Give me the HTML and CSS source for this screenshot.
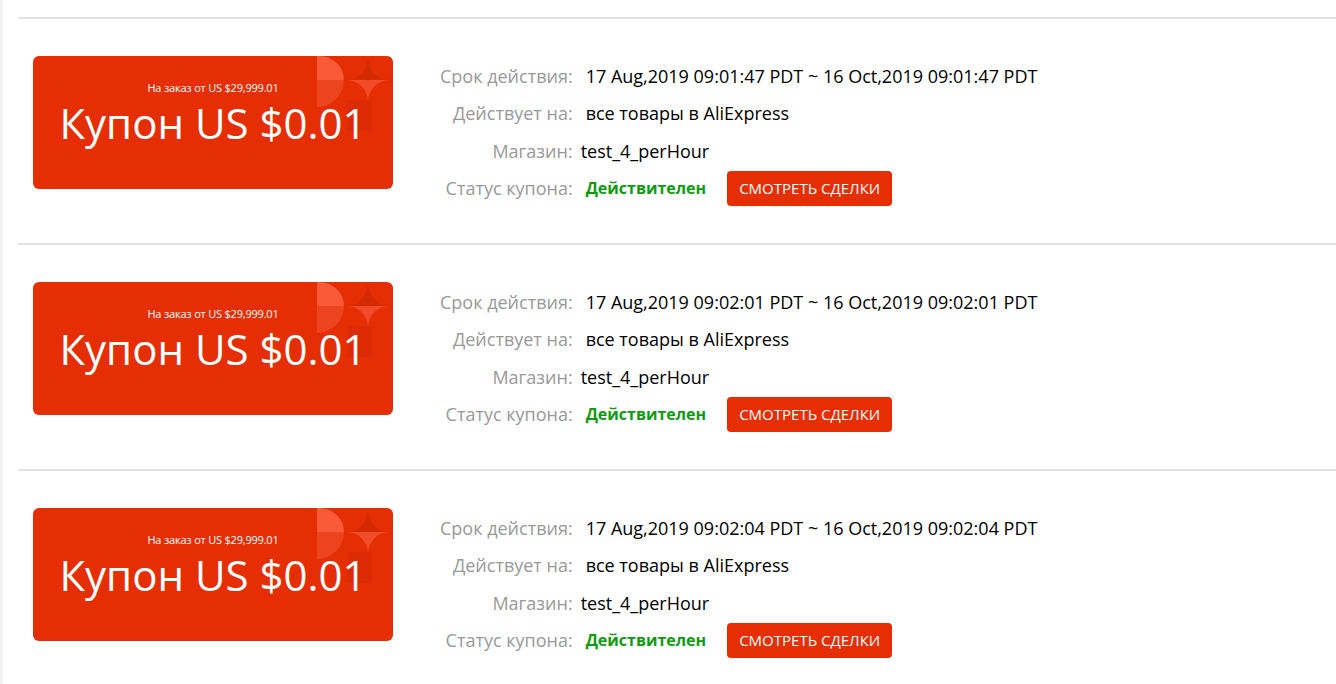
FILE: index.html
```html
<!DOCTYPE html>
<html lang="ru">
<head>
<meta charset="utf-8">
<title>Купоны</title>
<link rel="stylesheet" href="styles.css">
</head>
<body>
<div class="page">
  <div class="coupon-row">
    <div class="card">
      <svg class="deco" viewBox="280 0 80 80" width="80" height="80" aria-hidden="true">
        <path d="M284 0 H286 A25 24 0 0 1 311 24 H284 Z" fill="#fb5a39"/>
        <path d="M284 24 H311 A27 27 0 0 1 284 51 Z" fill="#ed4420"/>
        <rect x="314" y="44" width="25" height="31" fill="#d32a05" opacity="0.5"/>
        <path d="M314 24 A21 24 0 0 0 335 0 A21 24 0 0 0 356 24 Z" fill="#d42a03"/>
        <path d="M314 24 H356 A21 22 0 0 0 335 46 A21 22 0 0 0 314 24 Z" fill="#f24b29"/>
      </svg>
      <div class="card-min">На заказ от US $29,999.01</div>
      <div class="card-value">Купон US $0.01</div>
    </div>
    <div class="info">
      <div class="label">Срок действия:</div>
      <div class="value">17 Aug,2019 09:01:47 PDT ~ 16 Oct,2019 09:01:47 PDT</div>
      <div class="label">Действует на:</div>
      <div class="value">все товары в AliExpress</div>
      <div class="label">Магазин:</div>
      <div class="value value-store">test_4_perHour</div>
      <div class="label">Статус купона:</div>
      <div class="value status"><span class="valid">Действителен</span><a class="btn" href="#">СМОТРЕТЬ СДЕЛКИ</a></div>
    </div>
  </div>
  <div class="coupon-row">
    <div class="card">
      <svg class="deco" viewBox="280 0 80 80" width="80" height="80" aria-hidden="true">
        <path d="M284 0 H286 A25 24 0 0 1 311 24 H284 Z" fill="#fb5a39"/>
        <path d="M284 24 H311 A27 27 0 0 1 284 51 Z" fill="#ed4420"/>
        <rect x="314" y="44" width="25" height="31" fill="#d32a05" opacity="0.5"/>
        <path d="M314 24 A21 24 0 0 0 335 0 A21 24 0 0 0 356 24 Z" fill="#d42a03"/>
        <path d="M314 24 H356 A21 22 0 0 0 335 46 A21 22 0 0 0 314 24 Z" fill="#f24b29"/>
      </svg>
      <div class="card-min">На заказ от US $29,999.01</div>
      <div class="card-value">Купон US $0.01</div>
    </div>
    <div class="info">
      <div class="label">Срок действия:</div>
      <div class="value">17 Aug,2019 09:02:01 PDT ~ 16 Oct,2019 09:02:01 PDT</div>
      <div class="label">Действует на:</div>
      <div class="value">все товары в AliExpress</div>
      <div class="label">Магазин:</div>
      <div class="value value-store">test_4_perHour</div>
      <div class="label">Статус купона:</div>
      <div class="value status"><span class="valid">Действителен</span><a class="btn" href="#">СМОТРЕТЬ СДЕЛКИ</a></div>
    </div>
  </div>
  <div class="coupon-row">
    <div class="card">
      <svg class="deco" viewBox="280 0 80 80" width="80" height="80" aria-hidden="true">
        <path d="M284 0 H286 A25 24 0 0 1 311 24 H284 Z" fill="#fb5a39"/>
        <path d="M284 24 H311 A27 27 0 0 1 284 51 Z" fill="#ed4420"/>
        <rect x="314" y="44" width="25" height="31" fill="#d32a05" opacity="0.5"/>
        <path d="M314 24 A21 24 0 0 0 335 0 A21 24 0 0 0 356 24 Z" fill="#d42a03"/>
        <path d="M314 24 H356 A21 22 0 0 0 335 46 A21 22 0 0 0 314 24 Z" fill="#f24b29"/>
      </svg>
      <div class="card-min">На заказ от US $29,999.01</div>
      <div class="card-value">Купон US $0.01</div>
    </div>
    <div class="info">
      <div class="label">Срок действия:</div>
      <div class="value">17 Aug,2019 09:02:04 PDT ~ 16 Oct,2019 09:02:04 PDT</div>
      <div class="label">Действует на:</div>
      <div class="value">все товары в AliExpress</div>
      <div class="label">Магазин:</div>
      <div class="value value-store">test_4_perHour</div>
      <div class="label">Статус купона:</div>
      <div class="value status"><span class="valid">Действителен</span><a class="btn" href="#">СМОТРЕТЬ СДЕЛКИ</a></div>
    </div>
  </div>
</div>
</body>
</html>
```

FILE: styles.css
```css
html, body {
  margin: 0;
  padding: 0;
  background: #fff;
}
body {
  font-family: "Open Sans", "Liberation Sans", sans-serif;
  color: #000;
  overflow: hidden;
}
.page {
  border-left: 3px solid #f0f0f0;
  padding: 17px 0 0 15px;
  min-height: 700px;
  box-sizing: border-box;
}
.coupon-row {
  display: flex;
  align-items: flex-start;
  border-top: 2px solid #e2e2e2;
  padding: 37px 0 37px 15px;
  height: 150px;
}
.card {
  position: relative;
  width: 360px;
  height: 133px;
  background: #e62e04;
  border-radius: 6px;
  overflow: hidden;
  color: #fff;
  display: flex;
  flex-direction: column;
  align-items: center;
  box-sizing: border-box;
  padding-top: 25px;
}
.deco {
  position: absolute;
  top: 0;
  left: 280px;
}
.card-min {
  position: relative;
  font-size: 11px;
  line-height: 14px;
  letter-spacing: -0.2px;
}
.card-value {
  position: relative;
  font-size: 42px;
  line-height: 50px;
  margin-top: 3px;
}
.info {
  margin-left: 47px;
  display: grid;
  grid-template-columns: max-content auto;
  grid-auto-rows: 37.5px;
  column-gap: 13px;
  align-items: center;
  font-size: 18px;
  line-height: 24px;
  margin-top: 1px;
}
.label {
  color: #999;
  text-align: right;
}
.value {
  color: #000;
}
.value-store {
  margin-left: -5px;
}
.status {
  display: flex;
  align-items: center;
}
.valid {
  color: #0f9b0f;
  font-weight: 700;
  font-size: 16px;
}
.btn {
  margin-left: 21px;
  height: 35px;
  padding: 0 12px;
  display: flex;
  align-items: center;
  background: #e62e04;
  color: #fff;
  border-radius: 4px;
  font-size: 15px;
  text-decoration: none;
}
```
